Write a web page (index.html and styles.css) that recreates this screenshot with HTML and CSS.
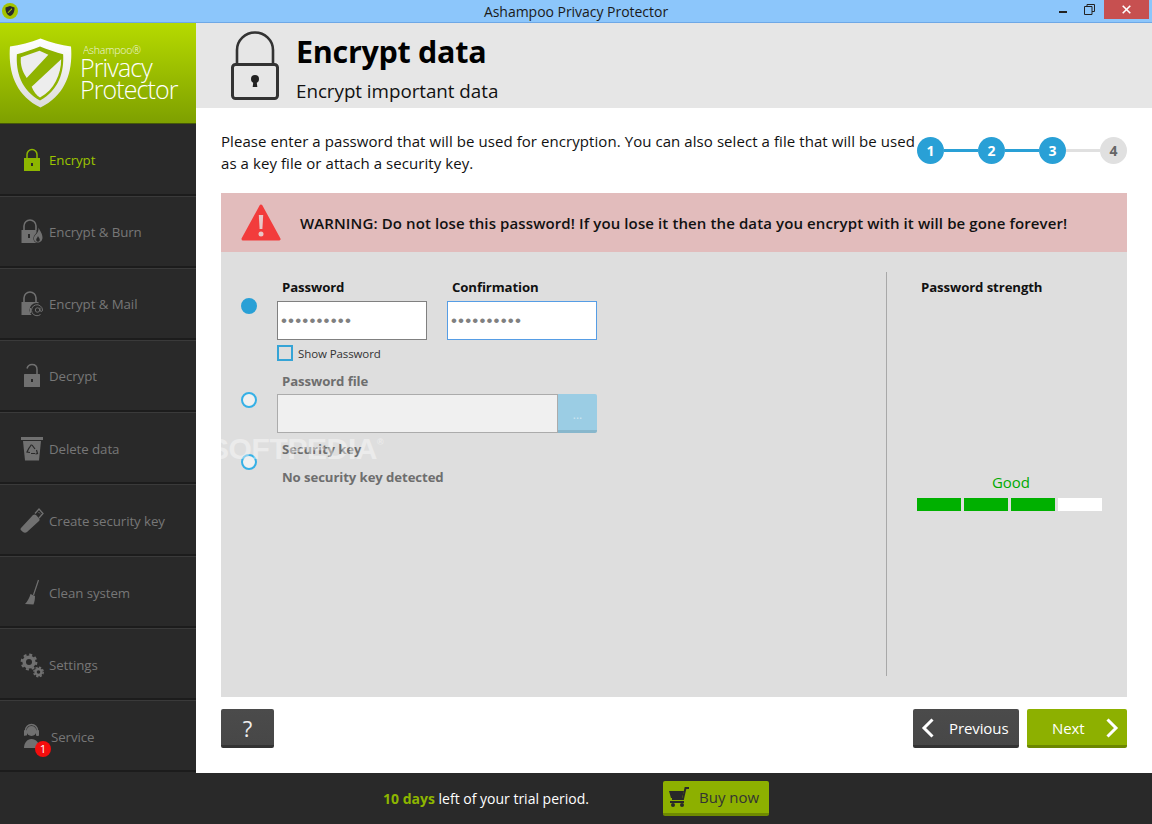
FILE: index.html
```html
<!DOCTYPE html>
<html lang="en">
<head>
<meta charset="utf-8">
<title>Ashampoo Privacy Protector</title>
<link rel="stylesheet" href="styles.css">
</head>
<body>
<div class="app">
  <div class="titlebar">
    <svg class="app-icon" viewBox="0 0 16 16"><circle cx="8" cy="8" r="8" fill="#a3c400"/><path d="M8 3l4.500 1.400c.2 4-1 7-4.500 8.600C4.500 11.400 3.300 8.400 3.500 4.400z" fill="#2b2b2b"/><path d="M5.500 9.500l4.500-4.500v1.500l-3.500 3.500z" fill="#a3c400"/></svg>
    <span class="title-text">Ashampoo Privacy Protector</span>
    <div class="win-controls">
      <span class="win-min"></span>
      <svg class="win-restore" viewBox="0 0 11 11"><path d="M3 2.500V.5h7.500v7H8M.5 2.500h7.500v8H.5z" fill="none" stroke="#222" stroke-width="1"/></svg>
      <span class="win-close"><svg viewBox="0 0 9 9" width="9" height="9"><path d="M.7.7l7.600 7.600M8.300.7L.7 8.300" stroke="#fff" stroke-width="1.600"/></svg></span>
    </div>
  </div>

  <div class="body">
    <aside class="sidebar">
      <div class="logo">
        <svg class="shield" viewBox="0 0 64 70">
          <defs><linearGradient id="sg" x1="0" y1="0" x2="0" y2="1"><stop offset="0" stop-color="#ffffff"/><stop offset="1" stop-color="#dcdcdc"/></linearGradient></defs>
          <path d="M32 0 C42 4 53 7 63 8 C65 33 58 57 32 70 C6 57 -1 33 1 8 C11 7 22 4 32 0z" fill="url(#sg)"/>
          <path d="M31.500 8 C39 11 48 14 55 16 C56 34 51 52 31.500 63 C12 52 7 34 8 16 C15 14 24 11 31.500 8z" fill="#8fb300"/>
          <path d="M31 12.500 L40 16.500 L18 40 C13 33 11.500 26 12 19z" fill="#ededed"/>
          <path d="M53 21 C53 36 46 52 31.500 60 C28 58 25 54 23 49z" fill="#ededed"/>
        </svg>
        <div class="logo-text">
          <span class="logo-brand">Ashampoo®</span>
          <span class="logo-name">Privacy</span>
          <span class="logo-name">Protector</span>
        </div>
      </div>
      <nav class="nav">
        <a class="nav-item active">
          <svg class="nav-icon" viewBox="0 0 24 26"><path d="M7 12V7.500a5 5 0 0 1 10 0V12" fill="none" stroke="#8db600" stroke-width="1.500"/><rect x="4" y="11" width="16" height="13" fill="#8db600"/><rect x="11" y="16" width="2" height="3" fill="#292929"/></svg>
          <span>Encrypt</span>
        </a>
        <a class="nav-item">
          <svg class="nav-icon" viewBox="0 0 24 26"><path d="M4 11V7a6 6 0 0 1 12 0v4" fill="none" stroke="#707070" stroke-width="1.600"/><rect x="1.500" y="11" width="15" height="13" fill="#707070"/><rect x="8" y="15" width="2" height="4" fill="#292929"/><path d="M18.500 7c1 3 4.500 6 4.500 11 0 3-2 6-5 6-3.500 0-5-3-4.500-5.500.4-2 2-3.500 3-4.500 1-1.500 2.300-4 2-7z" fill="#292929"/><path d="M18.500 8.500c1 3 4 5.500 4 10 0 2.500-1.500 5-4.500 5-3 0-4.500-2.500-4-5 .4-1.800 1.800-3 2.800-4 1.200-1.500 2-3.800 1.700-6z" fill="#707070"/><path d="M18 17c.4 1.500 1.800 2.200 1.800 3.700 0 1.200-.8 2-1.800 2s-1.800-.8-1.800-2c0-1.300 1.500-2 1.800-3.700z" fill="#292929"/></svg>
          <span>Encrypt &amp; Burn</span>
        </a>
        <a class="nav-item">
          <svg class="nav-icon" viewBox="0 0 24 26"><path d="M4 11V7a6 6 0 0 1 12 0v4" fill="none" stroke="#707070" stroke-width="1.600"/><rect x="1.500" y="11" width="17" height="13" fill="#707070"/><circle cx="16.500" cy="19" r="7" fill="#292929"/><path d="M20.500 23.500A5.500 5.500 0 1 1 22.500 19c0 2-2.500 2-2.500 0v-2.500" fill="none" stroke="#707070" stroke-width="1"/><circle cx="17.500" cy="19" r="2.200" fill="none" stroke="#707070" stroke-width="1"/><path d="M10.500 17v5" stroke="#707070" stroke-width="1"/></svg>
          <span>Encrypt &amp; Mail</span>
        </a>
        <a class="nav-item">
          <svg class="nav-icon" viewBox="0 0 24 26"><path d="M7 5.500c.7-2.500 2.700-4 5-4 3 0 5 2 5 5V12" fill="none" stroke="#707070" stroke-width="1.500"/><rect x="4" y="11" width="16" height="13" rx=".5" fill="#707070"/><rect x="11" y="16" width="2" height="3" fill="#292929"/></svg>
          <span>Decrypt</span>
        </a>
        <a class="nav-item">
          <svg class="nav-icon" viewBox="0 0 24 26"><path d="M1 1h22v3H1z" fill="#707070"/><path d="M3 5h18l-2 19.500H5z" fill="#707070"/><path d="M12 9l3 4M9 12l-2 4 3 .5M15 17.500h-4M16.500 14l1 3.500-2 .5M8.500 13l3-4.500" fill="none" stroke="#292929" stroke-width="1.200"/></svg>
          <span>Delete data</span>
        </a>
        <a class="nav-item">
          <svg class="nav-icon" viewBox="0 0 24 26"><path d="M1 20L13 7c1-.8 2.300-.8 3 0l3 3.200c.8.800.8 2 0 2.800L7 24c-1.200 1-2.800 1-4 0l-2-1.800c-.6-.6-.6-1.500 0-2.200z" fill="#707070"/><path d="M15 5.500L19 1l4 4.500-4 4.500" fill="none" stroke="#707070" stroke-width="1.300"/><path d="M18.500 4l1 1M20 5.500l.8.8" stroke="#707070" stroke-width="1"/></svg>
          <span>Create security key</span>
        </a>
        <a class="nav-item">
          <svg class="nav-icon" viewBox="0 0 24 26"><path d="M18.500 0l-5 15" stroke="#707070" stroke-width="1.200" fill="none"/><path d="M10.500 14l4.500 2c0 3-.5 6-1.500 8.500L5 24c2.500-2.500 4.300-6 5.500-10z" fill="#707070"/></svg>
          <span>Clean system</span>
        </a>
        <a class="nav-item">
          <svg class="nav-icon gear-icon" viewBox="0 0 24 26"><circle cx="9" cy="10" r="4.800" fill="none" stroke="#707070" stroke-width="3.600"/><circle cx="9" cy="10" r="7.300" fill="none" stroke="#707070" stroke-width="2.200" stroke-dasharray="3 2.730"/><circle cx="18.500" cy="20" r="3" fill="none" stroke="#707070" stroke-width="2.400"/><circle cx="18.500" cy="20" r="4.700" fill="none" stroke="#707070" stroke-width="1.500" stroke-dasharray="2.200 1.490"/></svg>
          <span>Settings</span>
        </a>
        <a class="nav-item service">
          <svg class="nav-icon" viewBox="0 0 24 26"><circle cx="11.500" cy="7" r="5" fill="#707070"/><path d="M5.500 8V6.500a6 6 0 0 1 12 0V8" fill="none" stroke="#707070" stroke-width="1.500"/><rect x="4" y="6" width="3" height="6" rx="1" fill="#707070"/><rect x="16" y="6" width="3" height="6" rx="1" fill="#707070"/><path d="M6 11c0 2 2 3 6 3" fill="none" stroke="#292929" stroke-width="1"/><path d="M4 24c0-5 3-9 7.500-9s8 4 8 9z" fill="#707070"/></svg>
          <span>Service</span>
          <span class="badge">1</span>
        </a>
      </nav>
    </aside>

    <main class="main">
      <header class="header">
        <svg class="header-icon" viewBox="0 0 48 70"><path d="M6 33V19a18 17.500 0 0 1 36 0v14" fill="none" stroke="#333" stroke-width="2.600"/><rect x="1.500" y="33.500" width="45" height="34" rx="3" fill="none" stroke="#333" stroke-width="3"/><circle cx="24" cy="48" r="4" fill="#222"/><path d="M22.500 49h3l.8 7h-4.600z" fill="#222"/></svg>
        <div class="header-text">
          <h1>Encrypt data</h1>
          <p>Encrypt important data</p>
        </div>
      </header>

      <div class="content">
        <div class="intro">
          <p>Please enter a password that will be used for encryption. You can also select a file that will be used as a key file or attach a security key.</p>
          <div class="steps">
            <span class="step done">1</span><span class="step-line done"></span>
            <span class="step done">2</span><span class="step-line done"></span>
            <span class="step done">3</span><span class="step-line"></span>
            <span class="step">4</span>
          </div>
        </div>

        <div class="warning">
          <svg class="warn-icon" viewBox="0 0 40 38"><path d="M20 2L38 35H2z" fill="#f23c3c" stroke="#f23c3c" stroke-width="3" stroke-linejoin="round"/><path d="M17.800 11h4.400l-.8 14h-2.800z" fill="#e8c8c8"/><circle cx="20" cy="30" r="2.500" fill="#e8c8c8"/></svg>
          <strong>WARNING: Do not lose this password! If you lose it then the data you encrypt with it will be gone forever!</strong>
        </div>

        <div class="panel">
          <div class="options">
            <div class="option opt-pass">
              <span class="radio checked"></span>
              <div class="option-body">
                <div class="pw-fields">
                  <label class="field"><span class="field-label">Password</span><input class="text-input" type="password" value="1234567890" readonly></label>
                  <label class="field"><span class="field-label">Confirmation</span><input class="text-input focus" type="password" value="1234567890" readonly></label>
                </div>
                <div class="show-pass"><span class="checkbox"></span><span>Show Password</span></div>
              </div>
            </div>
            <div class="option opt-file">
              <span class="radio"></span>
              <div class="option-body">
                <span class="field-label dim">Password file</span>
                <div class="file-row"><span class="file-input"></span><span class="browse">...</span></div>
              </div>
            </div>
            <div class="option opt-key">
              <span class="radio"></span>
              <div class="option-body">
                <span class="field-label dim">Security key</span>
                <span class="field-label dim nokey">No security key detected</span>
              </div>
            </div>
          </div>
          <div class="strength">
            <span class="field-label">Password strength</span>
            <div class="meter">
              <span class="meter-label">Good</span>
              <div class="meter-bars"><i class="on"></i><i class="on"></i><i class="on"></i><i></i></div>
            </div>
          </div>
        </div>

        <div class="actions">
          <button class="btn help">?</button>
          <div class="nav-btns">
            <button class="btn prev"><svg viewBox="0 0 14 22" width="14" height="22"><path d="M11.500 2.500L3 11l8.500 8.500" fill="none" stroke="#fff" stroke-width="3"/></svg><span>Previous</span></button>
            <button class="btn next"><span>Next</span><svg viewBox="0 0 14 22" width="14" height="22"><path d="M2.500 2.500L11 11l-8.500 8.500" fill="none" stroke="#fff" stroke-width="3"/></svg></button>
          </div>
        </div>
      </div>
    </main>
  </div>

  <footer class="footer">
    <p class="trial"><b>10 days</b> left of your trial period.</p>
    <button class="buy">
      <svg viewBox="0 0 22 20" width="22" height="20"><path d="M21 1h-3.500l-2.500 11H4" fill="none" stroke="#292929" stroke-width="2"/><path d="M1 4h15l-2 7H3z" fill="#292929"/><rect x="2" y="14" width="14" height="2" fill="#292929"/><circle cx="5" cy="18" r="2" fill="#292929"/><circle cx="14" cy="18" r="2" fill="#292929"/></svg>
      <span>Buy now</span>
    </button>
  </footer>

  <div class="watermark">SOFTPEDIA<sup>®</sup></div>
</div>
</body>
</html>
```
FILE: styles.css
```css
* { box-sizing: border-box; }
html, body { margin: 0; padding: 0; height: 100%; }
body { font-family: "Open Sans", "Noto Sans", sans-serif; color: #111; background: #fff; }
p, h1 { margin: 0; }
.app { position: relative; width: 1152px; height: 824px; display: flex; flex-direction: column; overflow: hidden; }

.titlebar { position: relative; height: 23px; background: #8cc6fb; border-bottom: 1px solid #6ea8e6; display: flex; align-items: flex-start; justify-content: center; flex: none; }
.app-icon { position: absolute; left: 2px; top: 3px; width: 16px; height: 16px; }
.title-text { font-size: 14px; line-height: 24px; letter-spacing: -.03px; color: #1a1a1a; }
.win-controls { position: absolute; right: 3px; top: 0; display: flex; align-items: flex-start; }
.win-min { width: 8px; height: 2px; margin: 11px 17px 0 0; background: #222; }
.win-restore { width: 11px; height: 11px; margin: 4px 9px 0 0; }
.win-close { width: 45px; height: 19px; background: #c75050; display: flex; align-items: center; justify-content: center; }

.body { flex: 1; display: flex; min-height: 0; }
.sidebar { width: 196px; flex: none; background: #292929; display: flex; flex-direction: column; }
.logo { height: 101px; flex: none; padding: 15px 0 0 9px; display: flex; gap: 9px; background: linear-gradient(#b6da00, #7ea000); border-bottom: 1px solid #46580a; }
.shield { width: 63px; height: 70px; flex: none; }
.logo-text { display: flex; flex-direction: column; color: #fff; padding-top: 6px; }
.logo-brand { font-size: 10.500px; font-weight: 300; line-height: 12px; margin-left: 2px; opacity: .85; letter-spacing: -.2px; }
.logo-name { font-family: "Open Sans", sans-serif; font-size: 25px; font-weight: 300; line-height: 22px; letter-spacing: -.9px; margin-left: -1px; }

.nav { display: flex; flex-direction: column; }
.nav-item { height: 72px; display: flex; align-items: center; gap: 5px; padding: 2px 0 0 20px; font-size: 13.300px; color: #777; position: relative; border-bottom: 2px solid #1c1c1c; letter-spacing: -.08px; }
.nav-item + .nav-item { border-top: 1px solid #3a3a3a; }
.nav-item:nth-child(n+2):nth-child(-n+4) { padding-top: 0; }
.nav-item.active { color: #9cc400; }
.nav-icon { width: 24px; height: 26px; flex: none; overflow: visible; }
.service { gap: 7px; }
.badge { position: absolute; left: 35px; top: 40px; width: 16px; height: 16px; border-radius: 50%; background: #f30d0d; color: #fff; font-size: 11.500px; line-height: 16px; text-align: center; }

.main { flex: 1; display: flex; flex-direction: column; min-width: 0; }
.header { height: 85px; flex: none; background: #e6e6e6; display: flex; padding: 7px 0 0 35px; gap: 17px; }
.header-icon { width: 48px; height: 70px; flex: none; margin-top: 1px; }
.header-text h1 { font-size: 30.500px; line-height: 42px; font-weight: 700; color: #000; letter-spacing: -.3px; }
.header-text p { font-size: 18.800px; line-height: 26px; margin-top: 6px; color: #111; letter-spacing: -.03px; }

.content { flex: 1; padding: 22px 25px 0; display: flex; flex-direction: column; min-height: 0; }
.intro { display: flex; justify-content: space-between; align-items: flex-start; height: 63px; flex: none; }
.intro p { width: 696px; font-size: 15px; line-height: 22px; letter-spacing: .07px; color: #111; }
.steps { display: flex; align-items: center; margin-top: 7px; }
.step { width: 27px; height: 27px; border-radius: 50%; background: #e0e0e0; color: #666; font-size: 14px; font-weight: 700; text-align: center; line-height: 27px; }
.step.done { background: #29a0d6; color: #fff; }
.step-line { width: 34px; height: 3px; background: #e0e0e0; }
.step-line.done { background: #29a0d6; }

.warning { height: 59px; flex: none; background: #e2bcbc; display: flex; align-items: center; padding-left: 20px; gap: 19px; }
.warn-icon { width: 40px; height: 38px; flex: none; }
.warning strong { font-size: 15px; font-weight: 600; color: #111; letter-spacing: .11px; white-space: nowrap; }

.panel { height: 445px; flex: none; background: #dedede; display: flex; padding: 20px 0 21px 20px; }
.options { width: 646px; flex: none; padding-top: 6px; border-right: 1px solid #a8a8a8; display: flex; flex-direction: column; }
.option { display: flex; gap: 20px; }
.radio { width: 16px; height: 16px; flex: none; border-radius: 50%; border: 2px solid #35b0e6; background: #f0f0f0; }
.radio.checked { background: #29a0d6; border-color: #29a0d6; }
.option-body { display: flex; flex-direction: column; }
.opt-pass { height: 94px; }
.opt-pass .radio { margin-top: 20px; }
.opt-file { height: 68px; }
.opt-file .radio { margin-top: 20px; }
.opt-key .radio { margin-top: 14px; }

.field { display: flex; flex-direction: column; width: 150px; }
.pw-fields { display: flex; gap: 20px; }
.field-label { font-size: 13.200px; font-weight: 700; line-height: 18px; color: #111; padding-left: 5px; letter-spacing: -.1px; }
.field .field-label { height: 23px; }
.field-label.dim { color: #6e6e6e; }
.text-input { width: 150px; height: 39px; padding: 0 3px; border: 1px solid #808080; border-radius: 0; background: #fff; font-family: "Liberation Sans", sans-serif; font-size: 17px; letter-spacing: 1.150px; color: #808080; outline: none; }
.text-input.focus { border-color: #569de5; }
.show-pass { display: flex; align-items: center; gap: 5px; margin-top: 5px; font-size: 11.500px; color: #333; letter-spacing: -.1px; }
.checkbox { width: 16px; height: 16px; border: 2px solid #35a4d6; background: #dedede; }
.opt-file .field-label { height: 22px; }
.file-row { display: flex; width: 320px; height: 39px; }
.file-input { width: 281px; background: #f0f0f0; border: 1px solid #ababab; }
.browse { width: 39px; background: #9bcde4; border-bottom: 3px solid #88b7cc; color: #cfe6f0; font-size: 12px; text-align: center; line-height: 42px; border-radius: 0 2px 2px 0; }
.nokey { margin-top: 10px; }

.strength { flex: 1; padding-left: 30px; display: flex; flex-direction: column; padding-top: 6px; }
.strength .field-label { padding-left: 4px; }
.meter { margin-top: 176px; width: 185px; display: flex; flex-direction: column; align-items: center; gap: 6px; }
.meter-label { font-size: 15px; line-height: 20px; color: #00aa00; padding-left: 3px; }
.meter-bars { display: flex; gap: 3px; }
.meter-bars i { width: 44px; height: 13px; background: #fff; display: block; }
.meter-bars i.on { background: #00b000; }

.actions { display: flex; justify-content: space-between; padding-top: 12px; }
.nav-btns { display: flex; gap: 8px; }
.btn { height: 39px; border: 0; border-bottom: 3px solid #333; border-radius: 2px; background: linear-gradient(#4b4b4b, #474747); color: #fff; font-family: inherit; font-size: 15px; display: flex; align-items: center; padding: 1px 0 0; letter-spacing: -.1px; }
.help { width: 53px; justify-content: center; font-size: 22px; color: #eee; font-weight: 400; }
.prev { width: 106px; padding-left: 8px; gap: 14px; }
.next { width: 100px; padding: 1px 8px 0 25px; justify-content: space-between; background: #8db000; border-bottom-color: #6c8700; }

.footer { height: 51px; flex: none; background: #292929; display: flex; align-items: flex-start; padding: 8px 0 0 383px; }
.trial { width: 280px; font-size: 14px; line-height: 36px; color: #fff; letter-spacing: 0; }
.trial b { color: #8db600; font-weight: 700; }
.buy { width: 106px; height: 35px; border: 0; border-bottom: 3px solid #6f8a00; border-radius: 2px; background: #8db000; display: flex; align-items: center; padding: 0 0 0 5px; gap: 9px; font-family: inherit; font-size: 15px; color: #333; letter-spacing: 0; }

.watermark { position: absolute; left: 209px; top: 429px; font-family: "Liberation Sans", sans-serif; font-size: 30px; font-weight: 700; color: rgba(255,255,255,.42); letter-spacing: -.4px; line-height: 40px; pointer-events: none; }
.watermark sup { font-size: 9px; vertical-align: 14px; line-height: 0; }
```
